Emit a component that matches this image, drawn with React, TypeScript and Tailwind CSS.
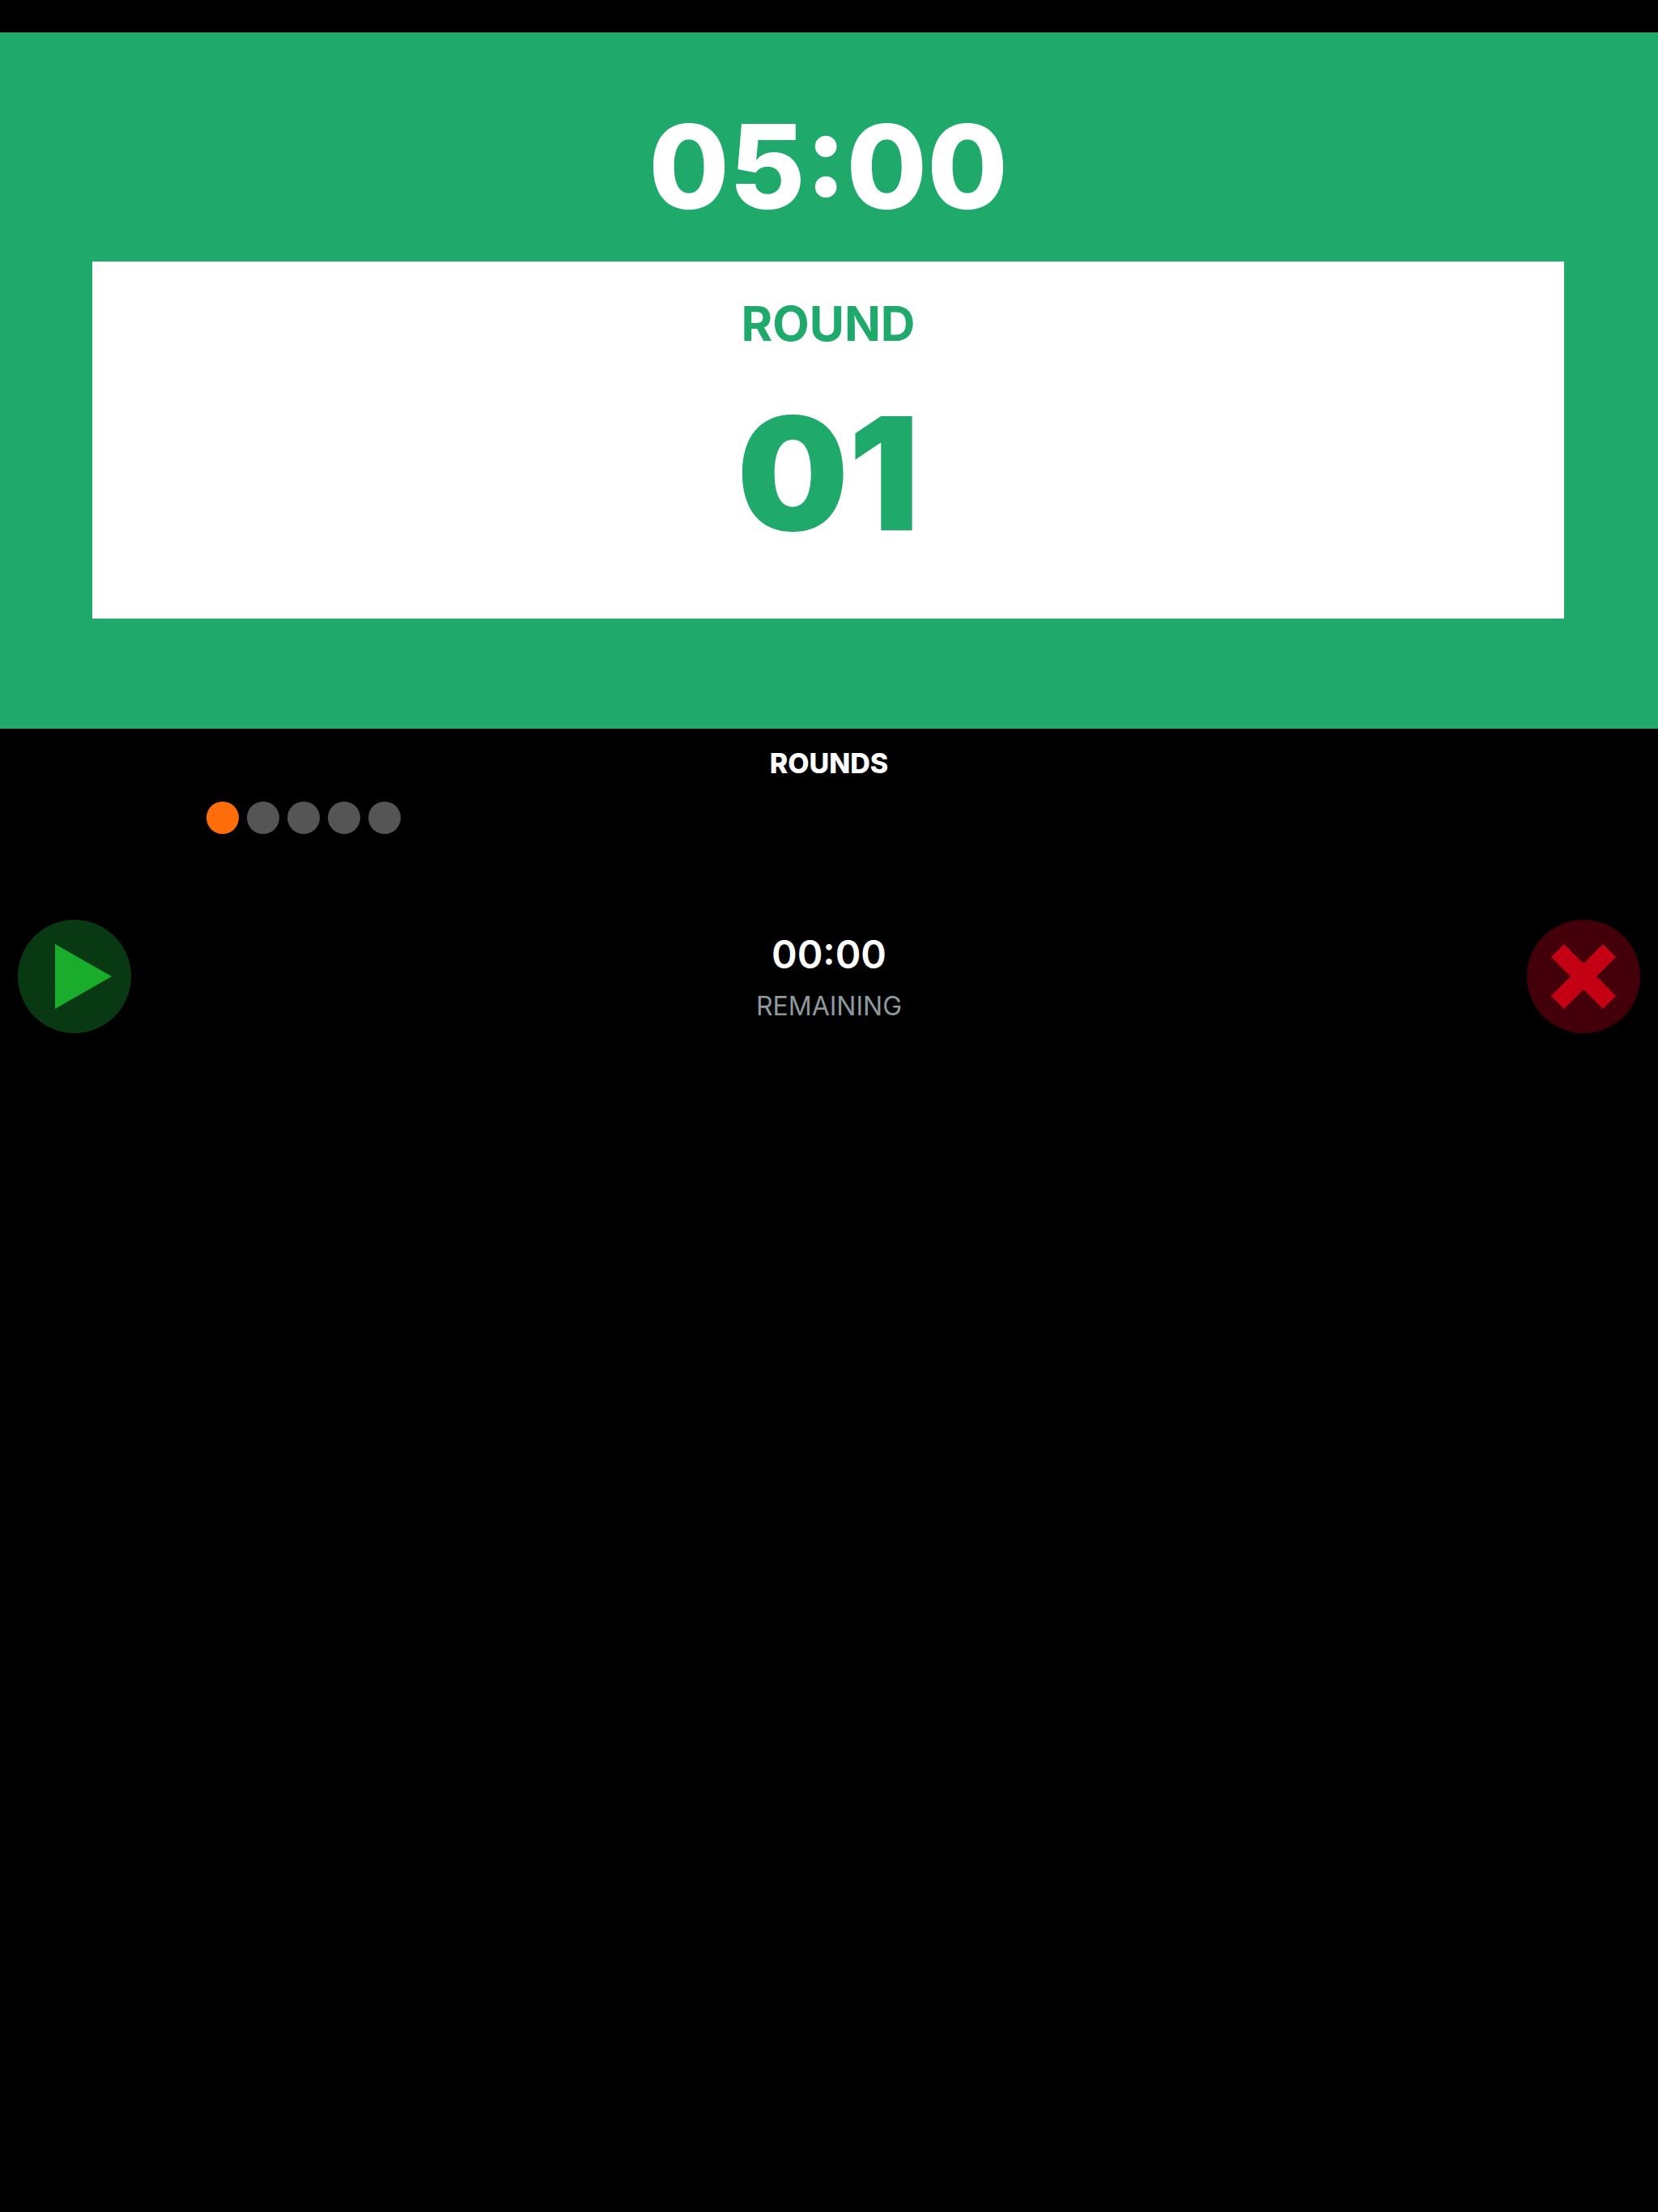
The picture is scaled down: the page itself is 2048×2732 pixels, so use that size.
import React, { useState } from "react";

const TOTAL_ROUNDS = 5;

const pad = (value: number) => String(value).padStart(2, "0");

const formatTime = (seconds: number) =>
  `${pad(Math.floor(seconds / 60))}:${pad(seconds % 60)}`;

const RoundDots = ({ current }: { current: number }) => {
  return (
    <div className="mt-[27px] flex flex-wrap gap-[10px] px-[255px]">
      {Array.from({ length: TOTAL_ROUNDS }, (_, i) => (
        <span
          key={i}
          className={`size-10 rounded-full ${i < current ? "bg-[#ff6d0a]" : "bg-[#555555]"}`}
        />
      ))}
    </div>
  );
};

const PlayIcon = () => (
  <svg viewBox="0 0 140 140" className="size-full" aria-hidden="true">
    <path d="M46 30 L116 70 L46 110 Z" fill="#1aad2b" />
  </svg>
);

const CrossIcon = () => (
  <svg viewBox="0 0 140 140" className="size-full" aria-hidden="true">
    <path
      d="M46 30 L70 54 L94 30 L110 46 L86 70 L110 94 L94 110 L70 86 L46 110 L30 94 L54 70 L30 46 Z"
      fill="#c40015"
    />
  </svg>
);

const App = () => {
  const [round, setRound] = useState(1);
  const [remaining, setRemaining] = useState(0);

  const start = () => setRemaining(TOTAL_ROUNDS * 300);

  const reset = () => {
    setRound(1);
    setRemaining(0);
  };

  return (
    <div className="min-h-screen bg-black pt-10 text-center font-['Inter',sans-serif] text-white">
      <section className="bg-[#1faa6c] pt-16 pr-[116px] pb-[136px] pl-[114px]">
        <h1 className="mb-[15px] text-[144px] leading-[204px] font-extrabold">{formatTime(300)}</h1>
        <div className="bg-white pt-10 pb-[59px] text-[#1faa6c]">
          <h2 className="text-[59px] leading-[74px] font-bold">ROUND</h2>
          <p className="mt-[28px] text-[194px] leading-[240px] font-black">{pad(round)}</p>
        </div>
      </section>

      <section className="pt-[23px]">
        <h3 className="text-[34px] leading-[40px] font-extrabold">ROUNDS</h3>
        <RoundDots current={round} />
      </section>

      <section className="mt-[106px] flex items-start justify-between px-[22px]">
        <button
          type="button"
          aria-label="Start"
          onClick={start}
          className="size-[140px] rounded-full bg-[#093912]"
        >
          <PlayIcon />
        </button>
        <div className="pt-[11px] leading-[64px]">
          <p className="text-[48px] font-semibold">{formatTime(remaining)}</p>
          <p className="text-[32px] font-normal text-[#8e999e]">REMAINING</p>
        </div>
        <button
          type="button"
          aria-label="Stop"
          onClick={reset}
          className="size-[140px] rounded-full bg-[#43000b]"
        >
          <CrossIcon />
        </button>
      </section>
    </div>
  );
};

export default App;
